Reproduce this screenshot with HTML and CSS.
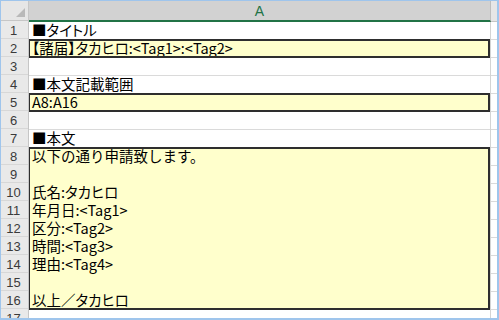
FILE: index.html
```html
<!DOCTYPE html>
<html lang="ja">
<head>
<meta charset="utf-8">
<title>Sheet1</title>
<link rel="stylesheet" href="styles.css">
</head>
<body>
  <div class="frame">
    <div class="rowHeads">
      <div class="corner"><svg width="9" height="9" viewBox="0 0 9 9"><polygon points="9,0 9,9 0,9" fill="#b9b9b9"/></svg></div>
      <div class="num">1</div>
      <div class="num">2</div>
      <div class="num">3</div>
      <div class="num">4</div>
      <div class="num">5</div>
      <div class="num">6</div>
      <div class="num">7</div>
      <div class="num">8</div>
      <div class="num">9</div>
      <div class="num">10</div>
      <div class="num">11</div>
      <div class="num">12</div>
      <div class="num">13</div>
      <div class="num">14</div>
      <div class="num">15</div>
      <div class="num">16</div>
      <div class="num">17</div>
    </div>

    <div class="colA">
      <div class="colHead selected">A</div>
      <div class="cell">■<span class="prop">タイトル</span></div>
      <div class="box" style="height: 19px">
        <div class="line"><span class="prop">【諸届】タカヒロ</span>:&lt;Tag1&gt;:&lt;Tag2&gt;</div>
      </div>
      <div class="cell"></div>
      <div class="cell">■本文記載範囲</div>
      <div class="box" style="height: 19px">
        <div class="line">A8:A16</div>
      </div>
      <div class="cell"></div>
      <div class="cell">■本文</div>
      <div class="box" style="height: 163px">
        <div class="line">以下の通り申請致します。</div>
        <div class="line"></div>
        <div class="line">氏名:<span class="prop">タカヒロ</span></div>
        <div class="line">年月日:&lt;Tag1&gt;</div>
        <div class="line">区分:&lt;Tag2&gt;</div>
        <div class="line">時間:&lt;Tag3&gt;</div>
        <div class="line">理由:&lt;Tag4&gt;</div>
        <div class="line"></div>
        <div class="line">以上／<span class="prop">タカヒロ</span></div>
      </div>
      <div class="cell"></div>
    </div>

    <div class="colB">
      <div class="colHead"></div>
      <div class="cell"></div>
      <div class="cell"></div>
      <div class="cell"></div>
      <div class="cell"></div>
      <div class="cell"></div>
      <div class="cell"></div>
      <div class="cell"></div>
      <div class="cell"></div>
      <div class="cell"></div>
      <div class="cell"></div>
      <div class="cell"></div>
      <div class="cell"></div>
      <div class="cell"></div>
      <div class="cell"></div>
      <div class="cell"></div>
      <div class="cell"></div>
      <div class="cell"></div>
    </div>
  </div>
</body>
</html>
```

FILE: styles.css
```css
body {
	margin: 0;
	background: #fff;
}
.frame {
	box-sizing: border-box;
	width: 499px;
	height: 320px;
	border: 1px solid #9fc5ec;
	border-right-width: 2px;
	border-bottom-width: 2px;
	display: flex;
	overflow: hidden;
	font-family: "Noto Sans CJK JP", sans-serif;
}

/* row numbers */
.rowHeads {
	width: 27px;
	flex: none;
	background: #e9e9e9;
	border-right: 1px solid #c6c6c6;
}
.corner {
	box-sizing: border-box;
	height: 20px;
	display: flex;
	align-items: flex-end;
	justify-content: flex-end;
	padding: 0 3px 3px 0;
	border-bottom: 1px solid #c6c6c6;
	background: #e6e6e6;
}
.num {
	box-sizing: border-box;
	height: 18px;
	border-bottom: 1px solid #d7d7d7;
	font-family: "Liberation Sans", sans-serif;
	font-size: 13px;
	line-height: 19px;
	color: #3a3a3a;
	text-align: center;
	padding-right: 2px;
}

/* columns */
.colA {
	width: 462px;
	flex: none;
	border-right: 1px solid #d4d4d4;
	box-sizing: border-box;
}
.colB {
	flex: 1;
}
.colHead {
	box-sizing: border-box;
	height: 21px;
	background: #e6e6e6;
	border-bottom: 1px solid #c6c6c6;
	font-family: "Liberation Sans", sans-serif;
	font-size: 14px;
	line-height: 20px;
	text-align: center;
}
.colHead.selected {
	background: #d2d2d2;
	color: #217346;
	border-bottom: 2px solid #217346;
	border-right: 1px solid #bdbdbd;
	margin-right: -1px;
}
.cell {
	box-sizing: border-box;
	height: 18px;
	border-bottom: 1px solid #dadada;
	padding-left: 3px;
	font-size: 14.5px;
	line-height: 16px;
	color: #000;
	white-space: nowrap;
}

/* bordered yellow blocks */
.box {
	box-sizing: border-box;
	margin-top: -1px;
	border: 2px solid #2e2e2e;
	border-left-width: 1px;
	background: #ffffcc;
	padding-left: 2px;
	font-size: 14.5px;
	color: #000;
	overflow: hidden;
}
.line {
	height: 18px;
	line-height: 14px;
	white-space: nowrap;
}

/* katakana and brackets are set proportional, as in the sheet font */
.prop {
	font-feature-settings: "palt";
}
```
